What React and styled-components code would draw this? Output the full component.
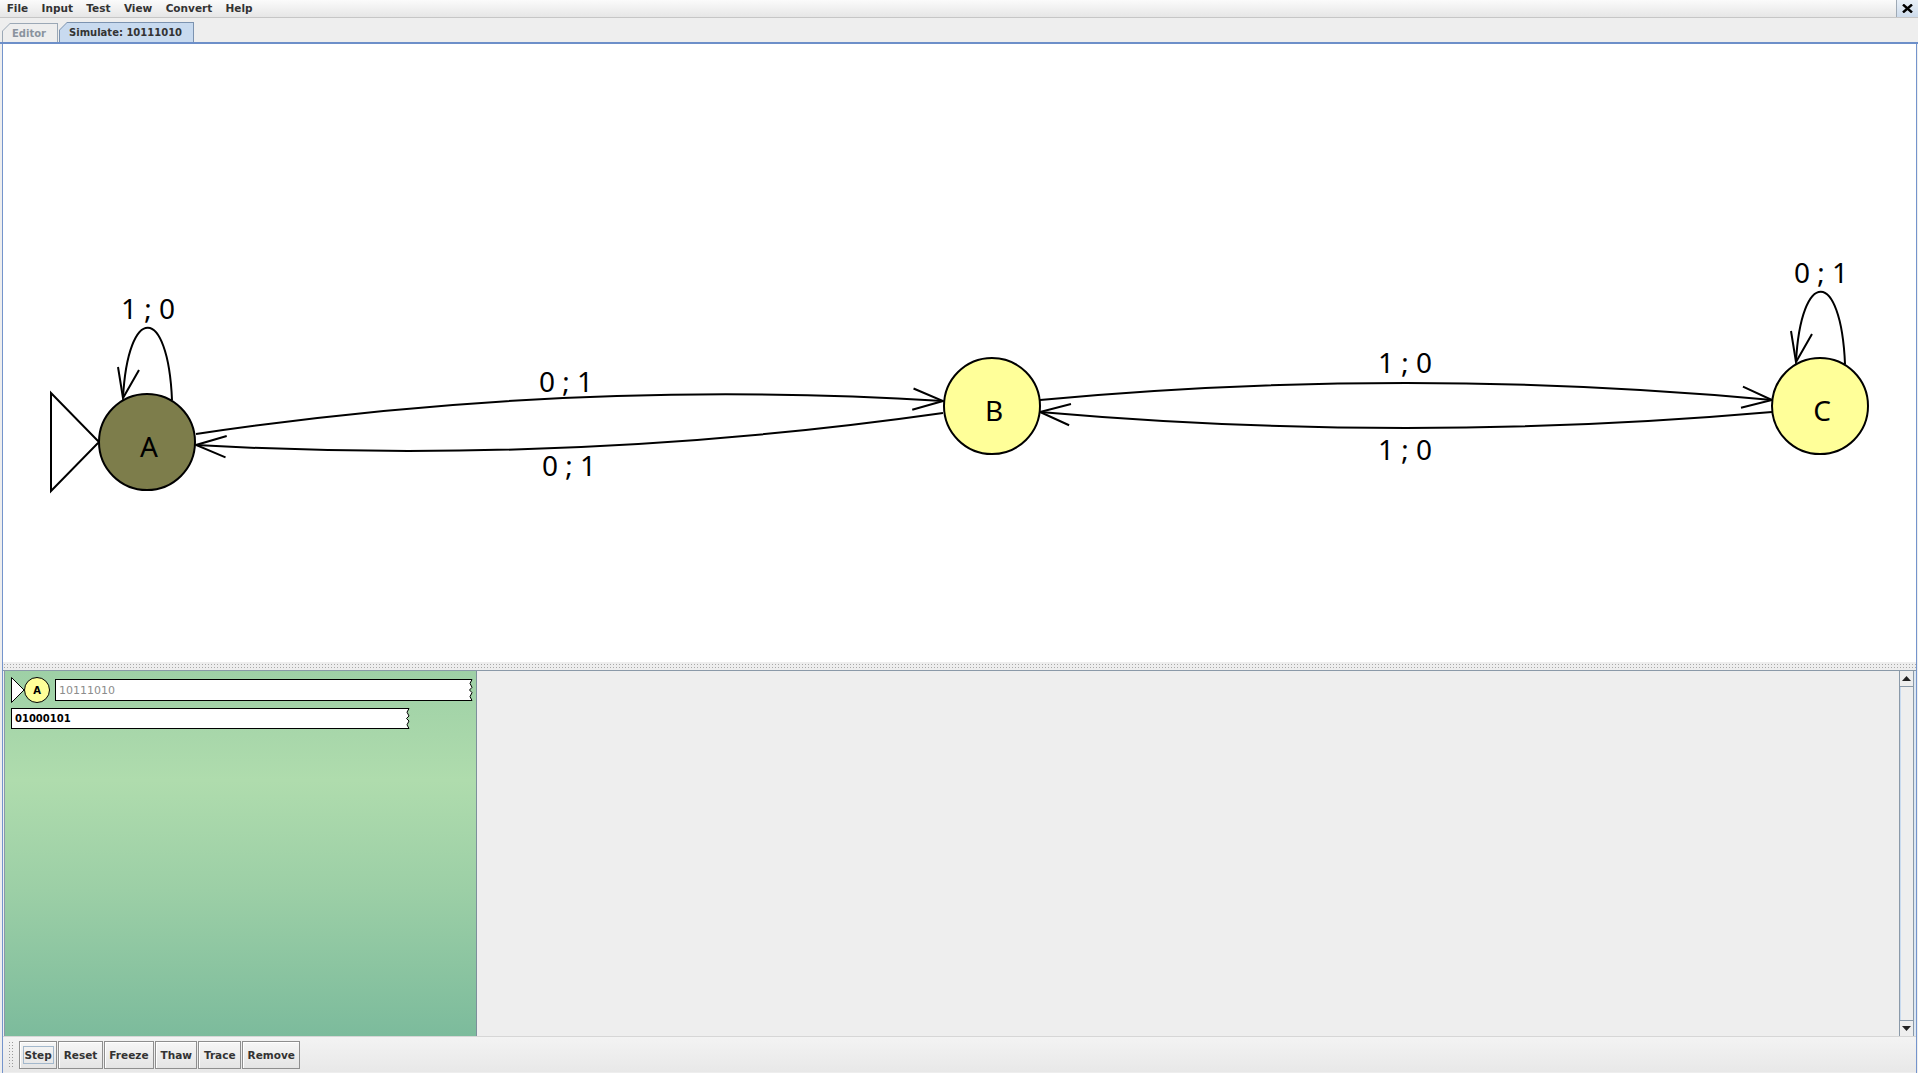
import React from "react";
import styled, { createGlobalStyle } from "styled-components";

const GlobalStyle = createGlobalStyle`
  html, body { margin: 0; padding: 0; width: 100%; height: 100%; overflow: hidden; background: #eeeeee; }
  #root { height: 100%; }
`;

const Window = styled.div`
  display: flex;
  flex-direction: column;
  width: 1918px;
  height: 1073px;
  font-family: "DejaVu Sans", "Liberation Sans", sans-serif;
  font-size: 10px;
  font-weight: bold;
  color: #333333;
`;

const MenuBar = styled.div`
  display: flex;
  align-items: center;
  height: 17px;
  border-bottom: 1px solid #c6c6c6;
  background: linear-gradient(#fbfbfb, #e6e6e6);
  font-size: 10.5px;
`;

const MenuItem = styled.span`
  padding: 0 6.7px;
  line-height: 17px;
`;

const CloseButton = styled.div`
  margin-left: auto;
  width: 22px;
  height: 17px;
  display: flex;
  align-items: center;
  justify-content: center;
  box-sizing: border-box;
  border-left: 1px solid #9ea9b5;
  background: linear-gradient(#e9f0f8, #cddbeb);
`;

const TabStrip = styled.div`
  height: 24px;
  display: flex;
  align-items: flex-end;
  padding-left: 2px;
  border-bottom: 2px solid #6d8fc9;
`;

const Tab = styled.div`
  box-sizing: border-box;
  height: ${(p) => (p.$active ? 20 : 19)}px;
  padding: 1px 1px 0 1px;
  margin-right: 1px;
  background: ${(p) => (p.$active ? "#7c93b0" : "#9ba8b6")};
  clip-path: polygon(0 8px, 8px 0, 100% 0, 100% 100%, 0 100%);
`;

const TabFace = styled.div`
  height: 100%;
  display: flex;
  align-items: center;
  padding: 0 11px 0 9px;
  background: ${(p) => (p.$active ? "#c8daef" : "#eeeeee")};
  color: ${(p) => (p.$active ? "#333333" : "#8a939e")};
  clip-path: polygon(0 7px, 7px 0, 100% 0, 100% 100%, 0 100%);
`;

const Frame = styled.div`
  flex: 1;
  min-height: 0;
  display: flex;
  flex-direction: column;
  margin: 0 1px 0 2px;
  border-left: 1px solid #7494cc;
  border-right: 1px solid #7494cc;
`;

const Canvas = styled.div`
  height: 618px;
  background: #ffffff;
`;

const Divider = styled.div`
  height: 8px;
  background-color: #eeeeee;
  background-image: radial-gradient(#a9a9a9 30%, transparent 38%);
  background-size: 3px 3px;
  background-position: 0 1px;
`;

const LowerPanel = styled.div`
  height: 365px;
  display: flex;
  border-top: 1px solid #8a99a8;
  background: #eeeeee;
`;

const GreenPanel = styled.div`
  box-sizing: border-box;
  width: 473px;
  margin-left: 1px;
  padding: 6px 0 0 6px;
  border-left: 1px solid #8a99a8;
  border-right: 1px solid #7d8f9b;
  background: linear-gradient(#9ed0a6 0%, #afdcad 30%, #9ccfa6 60%, #7cbb9c 100%);
`;

const ConfigRow = styled.div`
  display: flex;
  align-items: center;
  gap: 5px;
  height: 26px;
`;

const Tape = styled.div`
  display: flex;
  width: ${(p) => p.$width}px;
  height: ${(p) => p.$height}px;
  margin-top: ${(p) => p.$top || 0}px;
`;

const TapeBody = styled.div`
  flex: 1;
  display: flex;
  align-items: center;
  padding-left: 3px;
  background: #ffffff;
  border: 1px solid #000000;
  border-right: none;
  font-size: ${(p) => (p.$output ? "10px" : "11px")};
  font-weight: ${(p) => (p.$output ? "bold" : "normal")};
  color: ${(p) => (p.$output ? "#000000" : "#8c8c8c")};
`;

const Spacer = styled.div`
  flex: 1;
  background: #eeeeee;
`;

const ScrollBar = styled.div`
  box-sizing: border-box;
  width: 15px;
  display: flex;
  flex-direction: column;
  border-left: 1px solid #8a99a8;
  border-right: 1px solid #8a99a8;
  background: #eeeeee;
`;

const ScrollButton = styled.div`
  height: 15px;
  display: flex;
  align-items: center;
  justify-content: center;
  border-${(p) => (p.$down ? "top" : "bottom")}: 1px solid #8a99a8;
`;

const ScrollTrack = styled.div`
  flex: 1;
  box-shadow: inset 1px 0 #c8daef;
`;

const RightGutter = styled.div`
  width: 2px;
  background: #dde7f2;
`;

const Toolbar = styled.div`
  height: 35px;
  display: flex;
  align-items: center;
  padding-left: 5px;
  border-top: 1px solid #d6d6d6;
  background: linear-gradient(#f3f3f3, #e8e8e8);
`;

const Grip = styled.div`
  width: 7px;
  height: 28px;
  margin-right: 4px;
  background-image: radial-gradient(#9a9a9a 30%, transparent 38%);
  background-size: 3px 3px;
`;

const ToolButton = styled.div`
  box-sizing: border-box;
  height: 28px;
  display: flex;
  align-items: center;
  padding: 0 3.5px;
  margin-right: 1px;
  border: 1px solid #8e8e8e;
  box-shadow: inset 1px 1px #ffffff;
  background: linear-gradient(#f6f6f6, #e4e4e4);
  font-size: 10.5px;
`;

const FocusRing = styled.span`
  padding: 2px 1px;
  outline: 1px solid ${(p) => (p.$on ? "#a3b8cc" : "transparent")};
`;

/* ---- drawing helpers ---- */
const quad = (a, c, b) => `M ${a[0]} ${a[1]} Q ${c[0]} ${c[1]} ${b[0]} ${b[1]}`;

const head = (tip, from, len = 32, ang = 0.34) => {
  const a = Math.atan2(from[1] - tip[1], from[0] - tip[0]);
  const l = [tip[0] + len * Math.cos(a + ang), tip[1] + len * Math.sin(a + ang)];
  const r = [tip[0] + len * Math.cos(a - ang), tip[1] + len * Math.sin(a - ang)];
  return `M ${l[0]} ${l[1]} L ${tip[0]} ${tip[1]} L ${r[0]} ${r[1]}`;
};

const states = [
  { id: "A", x: 147, y: 442, fill: "#7d7d4b" },
  { id: "B", x: 992, y: 406, fill: "#ffff99" },
  { id: "C", x: 1820, y: 406, fill: "#ffff99" },
];

const edges = [
  { p0: [196, 434], c: [570, 378], p1: [943, 401], label: "0 ; 1", lx: 566, ly: 392 },
  { p0: [943, 413], c: [570, 466], p1: [196, 445], label: "0 ; 1", lx: 569, ly: 476 },
  { p0: [1040, 400], c: [1406, 366], p1: [1772, 400], label: "1 ; 0", lx: 1405, ly: 373 },
  { p0: [1772, 412], c: [1406, 444], p1: [1040, 412], label: "1 ; 0", lx: 1405, ly: 460 },
];

const loops = [
  { x: 147, y: 442, label: "1 ; 0" },
  { x: 1820, y: 406, label: "0 ; 1" },
];

const labelFont = {
  fontFamily: "'Noto Sans', 'DejaVu Sans', sans-serif",
  fontSize: 28,
  fontWeight: "normal",
};

const Diagram = () => (
  <svg width="100%" height="100%">
    <g transform="translate(-3,-44)" fill="none" stroke="#000" strokeWidth="2">
      {edges.map((e, i) => (
        <g key={i}>
          <path d={quad(e.p0, e.c, e.p1)} />
          <path d={head(e.p1, e.c)} />
          <text x={e.lx} y={e.ly} textAnchor="middle" fill="#000" stroke="none" style={labelFont}>
            {e.label}
          </text>
        </g>
      ))}
      {loops.map((l, i) => (
        <g key={i}>
          <path d={`M ${l.x + 25} ${l.y - 42} C ${l.x + 21} ${l.y - 138} ${l.x - 19} ${l.y - 138} ${l.x - 24} ${l.y - 44}`} />
          <path d={`M ${l.x - 29} ${l.y - 75} L ${l.x - 24} ${l.y - 44} L ${l.x - 8} ${l.y - 72}`} />
          <text x={l.x + 1} y={l.y - 123} textAnchor="middle" fill="#000" stroke="none" style={labelFont}>
            {l.label}
          </text>
        </g>
      ))}
      <polygon points="51,393 51,491 99,442" fill="#fff" />
      {states.map((s) => (
        <g key={s.id}>
          <circle cx={s.x} cy={s.y} r="48" fill={s.fill} />
          <text x={s.x + 2} y={s.y + 15} textAnchor="middle" fill="#000" stroke="none" style={labelFont}>
            {s.id}
          </text>
        </g>
      ))}
    </g>
  </svg>
);

const TornEdge = ({ h }) => (
  <svg width="6" height={h} style={{ display: "block" }}>
    <path
      d={`M0 0 L4 0 L2 ${h * 0.2} L4 ${h * 0.38} L1.5 ${h * 0.5} L4 ${h * 0.62} L2 ${h * 0.8} L4 ${h} L0 ${h} Z`}
      fill="#fff"
    />
    <path
      d={`M0 0.5 L4 0.5 L2 ${h * 0.2} L4 ${h * 0.38} L1.5 ${h * 0.5} L4 ${h * 0.62} L2 ${h * 0.8} L4 ${h - 0.5} L0 ${h - 0.5}`}
      fill="none"
      stroke="#000"
      strokeWidth="1"
    />
  </svg>
);

const MiniState = () => (
  <svg width="39" height="26" style={{ display: "block" }}>
    <polygon points="0.5,0.5 0.5,25.5 13,13" fill="#fff" stroke="#000" strokeWidth="1" />
    <circle cx="26" cy="13" r="12.5" fill="#ffff99" stroke="#000" strokeWidth="1" />
    <text x="26" y="17" textAnchor="middle" fontFamily="'DejaVu Sans', sans-serif" fontSize="10" fontWeight="bold" fill="#000">
      A
    </text>
  </svg>
);

const Arrow = ({ down }) => (
  <svg width="9" height="5">
    <polygon points={down ? "0,0 9,0 4.5,5" : "0,5 9,5 4.5,0"} fill="#222" />
  </svg>
);

const menus = ["File", "Input", "Test", "View", "Convert", "Help"];
const buttons = ["Step", "Reset", "Freeze", "Thaw", "Trace", "Remove"];

export default function App() {
  return (
    <>
      <GlobalStyle />
      <Window>
        <MenuBar>
          {menus.map((m) => (
            <MenuItem key={m}>{m}</MenuItem>
          ))}
          <CloseButton>
            <svg width="11" height="9">
              <path d="M1 0.5 L10 8.5 M10 0.5 L1 8.5" stroke="#000" strokeWidth="2.4" />
            </svg>
          </CloseButton>
        </MenuBar>
        <TabStrip>
          <Tab>
            <TabFace>Editor</TabFace>
          </Tab>
          <Tab $active>
            <TabFace $active>Simulate: 10111010</TabFace>
          </Tab>
        </TabStrip>
        <Frame>
          <Canvas>
            <Diagram />
          </Canvas>
          <Divider />
          <LowerPanel>
            <GreenPanel>
              <ConfigRow>
                <MiniState />
                <Tape $width={419} $height={22}>
                  <TapeBody>10111010</TapeBody>
                  <TornEdge h={22} />
                </Tape>
              </ConfigRow>
              <Tape $width={400} $height={21} $top={5}>
                <TapeBody $output>01000101</TapeBody>
                <TornEdge h={21} />
              </Tape>
            </GreenPanel>
            <Spacer />
            <ScrollBar>
              <ScrollButton>
                <Arrow />
              </ScrollButton>
              <ScrollTrack />
              <ScrollButton $down>
                <Arrow down />
              </ScrollButton>
            </ScrollBar>
            <RightGutter />
          </LowerPanel>
          <Toolbar>
            <Grip />
            {buttons.map((b, i) => (
              <ToolButton key={b}>
                <FocusRing $on={i === 0}>{b}</FocusRing>
              </ToolButton>
            ))}
          </Toolbar>
        </Frame>
      </Window>
    </>
  );
}
